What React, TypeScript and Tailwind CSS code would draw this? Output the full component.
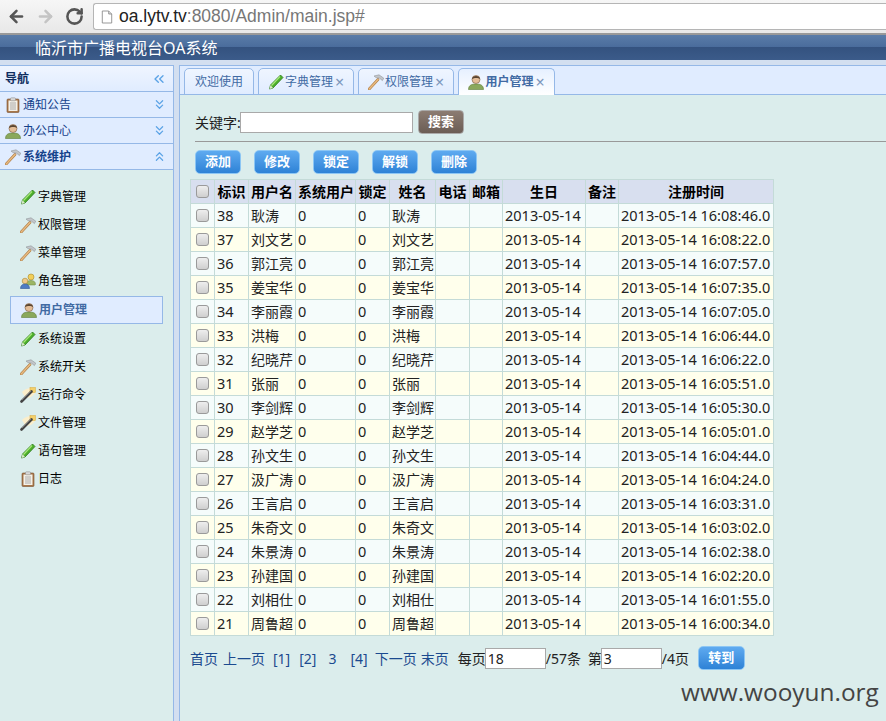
import React from 'react';
import { ArrowLeft, ArrowRight, RotateCw, ChevronsLeft, ChevronsDown, ChevronsUp } from 'lucide-react';

const Pencil = () => (
  <svg viewBox="0 0 16 16" className="w-4 h-4 shrink-0">
    <path d="M12.5 1 L15 3.5 L5 14 L1.5 15 L2.5 11 Z" fill="#4caf2a" stroke="#2c7a1c" strokeWidth="0.8" />
    <path d="M12 2.5 L3.5 11.5" stroke="#a8e67a" strokeWidth="1.2" />
    <path d="M2.5 11 L5 14 L1.5 15 Z" fill="#d9e8c8" />
  </svg>
);

const Hammer = () => (
  <svg viewBox="0 0 16 16" className="w-4 h-4 shrink-0">
    <path d="M1.2 15 L10 5.5" stroke="#b07c42" strokeWidth="2.6" strokeLinecap="round" />
    <path d="M1.2 15 L10 5.5" stroke="#e8bb82" strokeWidth="1.5" strokeLinecap="round" />
    <path d="M6 2 L11 0.8 L15.8 4.2 L14.4 6.6 L11.5 4.2 L8 3.6 Z" fill="#c3c6ca" stroke="#85888c" strokeWidth="0.5" />
  </svg>
);

const Clipboard = () => (
  <svg viewBox="0 0 16 16" className="w-4 h-4 shrink-0">
    <rect x="2" y="2" width="12" height="13.5" rx="1" fill="#a8774a" stroke="#7a5230" strokeWidth="0.6" />
    <rect x="3.5" y="3.5" width="9" height="10.5" fill="#f4f1e8" />
    <rect x="5.5" y="0.8" width="5" height="3" rx="0.8" fill="#d8d8d8" stroke="#888" strokeWidth="0.5" />
    <path d="M5 6h6M5 8h6M5 10h6M5 12h6" stroke="#9a9a9a" strokeWidth="0.8" />
  </svg>
);

const User = () => (
  <svg viewBox="0 0 16 16" className="w-4 h-4 shrink-0">
    <path d="M0.5 15.5 C0.5 11 4 10 8 10 C12 10 15.5 11 15.5 15.5 Z" fill="#8aa85c" stroke="#5f7d3a" strokeWidth="0.6" />
    <circle cx="8" cy="5.5" r="4" fill="#e4bd97" stroke="#7a5a40" strokeWidth="0.6" />
    <path d="M4 5 C4 1 12 1 12 5 C10.5 3.5 6 3.5 4 5 Z" fill="#5a4632" />
  </svg>
);

const Users = () => (
  <svg viewBox="0 0 16 16" className="w-4 h-4 shrink-0">
    <circle cx="11" cy="4" r="3" fill="#f2cf5a" stroke="#a8892c" strokeWidth="0.6" />
    <path d="M6.5 11 C6.5 8 9 7.5 11 7.5 C13.5 7.5 15.5 8.5 15.5 11.5 L15 12 L7 12 Z" fill="#9bb564" stroke="#6b8440" strokeWidth="0.5" />
    <circle cx="5" cy="8" r="2.8" fill="#f0c88a" stroke="#a8892c" strokeWidth="0.6" />
    <path d="M0.5 15.5 C0.5 12.5 2.5 11 5 11 C7.5 11 9.5 12.5 9.5 15.5 Z" fill="#4f7cc4" stroke="#2f5596" strokeWidth="0.6" />
  </svg>
);

const Wand = () => (
  <svg viewBox="0 0 16 16" className="w-4 h-4 shrink-0">
    <path d="M2 5 C5 2 8 1 11 1 L15 1 L15 5 C14 9 9 12 5 10 Z" fill="#fbeecb" />
    <rect x="10" y="0.5" width="5.5" height="5" fill="#f3cf6a" stroke="#d9a93c" strokeWidth="0.5" />
    <path d="M1.5 14.5 L11.5 4.5" stroke="#444" strokeWidth="2.6" strokeLinecap="round" />
    <path d="M2 13 L11 4" stroke="#999" strokeWidth="0.7" />
  </svg>
);

const menu: Array<{ icon: React.ReactNode; label: string; active?: boolean }> = [
  { icon: <Pencil />, label: '字典管理' },
  { icon: <Hammer />, label: '权限管理' },
  { icon: <Hammer />, label: '菜单管理' },
  { icon: <Users />, label: '角色管理' },
  { icon: <User />, label: '用户管理', active: true },
  { icon: <Pencil />, label: '系统设置' },
  { icon: <Hammer />, label: '系统开关' },
  { icon: <Wand />, label: '运行命令' },
  { icon: <Wand />, label: '文件管理' },
  { icon: <Pencil />, label: '语句管理' },
  { icon: <Clipboard />, label: '日志' },
];

const rows = [
  ['38', '耿涛', '16:08:46.0'],
  ['37', '刘文艺', '16:08:22.0'],
  ['36', '郭江亮', '16:07:57.0'],
  ['35', '姜宝华', '16:07:35.0'],
  ['34', '李丽霞', '16:07:05.0'],
  ['33', '洪梅', '16:06:44.0'],
  ['32', '纪晓芹', '16:06:22.0'],
  ['31', '张丽', '16:05:51.0'],
  ['30', '李剑辉', '16:05:30.0'],
  ['29', '赵学芝', '16:05:01.0'],
  ['28', '孙文生', '16:04:44.0'],
  ['27', '汲广涛', '16:04:24.0'],
  ['26', '王言启', '16:03:31.0'],
  ['25', '朱奇文', '16:03:02.0'],
  ['24', '朱景涛', '16:02:38.0'],
  ['23', '孙建国', '16:02:20.0'],
  ['22', '刘相仕', '16:01:55.0'],
  ['21', '周鲁超', '16:00:34.0'],
];

const headers = ['标识', '用户名', '系统用户', '锁定', '姓名', '电话', '邮箱', '生日', '备注', '注册时间'];
const widths = [24, 34, 47, 60, 34, 46, 34, 33, 83, 33, 155];

const AccordionHead = ({ icon, label, open }: { icon: React.ReactNode; label: string; open?: boolean }) => (
  <div className="h-[26px] flex items-center pl-[5px] pr-[6px] border-b border-[#95b8e7] bg-[#e0ecff]">
    {icon}
    <span className={`ml-[2px] text-[12px] text-[#15428b] ${open ? 'font-bold' : ''}`}>{label}</span>
    <span className="ml-auto">
      {open ? <ChevronsUp size={15} color="#5ba3e6" /> : <ChevronsDown size={15} color="#5ba3e6" />}
    </span>
  </div>
);

const Tab = ({ icon, label, active, closable, w }: { icon?: React.ReactNode; label: string; active?: boolean; closable?: boolean; w: string }) => (
  <div
    className={`${w} h-[27px] -mb-px flex items-center justify-center gap-[1px] border border-[#95b8e7] rounded-t-[5px] text-[12px] ${
      active
        ? 'border-b-0 bg-gradient-to-b from-[#e6f0ff] to-white text-[#416aa3] font-bold'
        : 'bg-gradient-to-b from-[#eff5ff] to-[#e0ecff] text-[#416aa3]'
    }`}
  >
    {icon}
    <span>{label}</span>
    {closable && <span className="text-[16px] font-normal leading-none text-[#7d98bd] ml-[1px]">×</span>}
  </div>
);

const BlueButton = ({ label, w }: { label: string; w: string }) => (
  <button className={`${w} h-[24px] rounded-[5px] border border-[#8cc6f4] bg-gradient-to-b from-[#5eaaf0] to-[#2d82d6] text-white text-[13px] font-bold`}>
    {label}
  </button>
);

const Check = () => (
  <input
    type="checkbox"
    className="block mx-auto w-[13px] h-[13px] appearance-none rounded-[3px] border border-[#9a9a9a] bg-gradient-to-b from-[#eeeeee] to-[#cfcfcf]"
  />
);

const cell = 'border border-[#c4dbd8] px-[2px] whitespace-nowrap overflow-hidden';
const latin = `${cell} text-[14.5px]`;
const link = 'text-[#1b4a8f]';

export default function App() {
  return (
    <div
      className="relative w-[886px] h-[721px] overflow-hidden flex flex-col bg-[#dbedec] text-[14px] text-[#222]"
      style={{ fontFamily: '"Noto Sans", "Noto Sans CJK SC", sans-serif' }}
    >
      {/* browser bar */}
      <div className="h-[35px] shrink-0 flex items-center gap-[10px] pl-[7px] bg-gradient-to-b from-[#f6f6f6] to-[#e8e8e8] border-b-2 border-[#999]">
        <ArrowLeft size={19} strokeWidth={3.2} color="#555" />
        <ArrowRight size={19} strokeWidth={3.2} color="#c4c4c4" />
        <RotateCw size={19} strokeWidth={3.2} color="#555" />
        <div className="-ml-[1px] flex-1 h-[27px] flex items-center pl-[7px] bg-white border border-[#b5b5b5] border-r-0 rounded-l-[3px]">
          <svg viewBox="0 0 14 16" className="w-[12px] h-[14px] shrink-0">
            <path d="M1.5 1 H9 L12.5 4.5 V15 H1.5 Z" fill="#fff" stroke="#888" />
            <path d="M9 1 V4.5 H12.5" fill="#ddd" stroke="#888" />
          </svg>
          <span className="ml-[6px] text-[17.5px] text-[#222]" style={{ fontFamily: '"Liberation Sans", sans-serif' }}>
            oa.lytv.tv<span className="text-[#777]">:8080/Admin/main.jsp#</span>
          </span>
        </div>
      </div>

      {/* system title */}
      <div className="h-[25px] shrink-0 flex items-center pl-[35px] bg-[linear-gradient(#5a7ca8_0%,#4a6c9c_48%,#34527f_48%,#3b5b8a_100%)]">
        <span className="text-[16px] leading-none text-white">临沂市广播电视台OA系统</span>
      </div>

      <div className="flex-1 flex pt-[5px] bg-[#d3dff0] min-h-0">
        {/* nav */}
        <div className="w-[174px] shrink-0 flex flex-col border-t border-r border-[#95b8e7] bg-[#dbedec]">
          <div className="h-[26px] shrink-0 flex items-center pl-[5px] pr-[6px] border-b border-[#95b8e7] bg-gradient-to-b from-[#eff5ff] to-[#e0ecff]">
            <span className="text-[12px] font-bold text-[#0e2d5f]">导航</span>
            <ChevronsLeft size={16} color="#5ba3e6" className="ml-auto" />
          </div>
          <AccordionHead icon={<Clipboard />} label="通知公告" />
          <AccordionHead icon={<User />} label="办公中心" />
          <AccordionHead icon={<Hammer />} label="系统维护" open />
          <div className="pt-[13px] pl-[10px] pr-[10px] flex flex-col">
            {menu.map((m) => (
              <div
                key={m.label}
                className={`h-[28px] flex items-center gap-[2px] pl-[10px] text-[12px] ${
                  m.active ? 'border border-[#95b8e7] bg-[#e0ecff] text-[#416aa3] font-bold my-px' : 'text-black'
                }`}
              >
                {m.icon}
                <span>{m.label}</span>
              </div>
            ))}
          </div>
        </div>

        <div className="w-[5px] shrink-0" />

        {/* main panel */}
        <div className="flex-1 min-w-0 flex flex-col border-l border-[#95b8e7] bg-[#dbedec]">
          <div className="h-[30px] shrink-0 flex items-end gap-[4px] pl-[4px] border-t border-b border-[#95b8e7] bg-[#e0ecff]">
            <Tab label="欢迎使用" w="w-[70px]" />
            <Tab icon={<Pencil />} label="字典管理" closable w="w-[96px]" />
            <Tab icon={<Hammer />} label="权限管理" closable w="w-[96px]" />
            <Tab icon={<User />} label="用户管理" closable active w="w-[97px]" />
          </div>

          <div className="flex-1 pl-[10px] min-h-0">
            {/* search */}
            <div className="h-[47px] flex items-center pt-[14px] pb-[6px] border-b border-[#999] ml-[5px] box-border">
              <span className="w-[45px] text-[14px] whitespace-nowrap text-[#222]">关键字:</span>
              <div className="w-[173px] h-[21px] bg-white border border-[#a9a9a9]" />
              <button className="ml-[5px] w-[46px] h-[24px] rounded-[4px] border border-[#aaa] bg-gradient-to-b from-[#8c7c72] to-[#6b5d55] text-white text-[13px] font-bold">
                搜索
              </button>
            </div>

            {/* toolbar */}
            <div className="flex gap-[13px] ml-[5px] mt-[8px]">
              {['添加', '修改', '锁定', '解锁', '删除'].map((b) => (
                <BlueButton key={b} label={b} w="w-[46px]" />
              ))}
            </div>

            {/* users */}
            <table className="mt-[5px] table-fixed border-collapse w-[583px]">
              <colgroup>
                {widths.map((w, i) => (
                  <col key={i} style={{ width: w }} />
                ))}
              </colgroup>
              <thead>
                <tr className="h-[24px] bg-[#d8dfef]">
                  <th className={cell}>
                    <Check />
                  </th>
                  {headers.map((h) => (
                    <th key={h} className={`${cell} text-[14px] font-bold text-black text-center leading-none`}>
                      {h}
                    </th>
                  ))}
                </tr>
              </thead>
              <tbody>
                {rows.map((r, i) => (
                  <tr key={r[0]} className={`h-[24px] ${i % 2 === 0 ? 'bg-[#f5fcfb]' : 'bg-[#ffffec]'}`}>
                    <td className={cell}>
                      <Check />
                    </td>
                    <td className={latin}>{r[0]}</td>
                    <td className={cell}>{r[1]}</td>
                    <td className={latin}>0</td>
                    <td className={latin}>0</td>
                    <td className={cell}>{r[1]}</td>
                    <td className={cell} />
                    <td className={cell} />
                    <td className={latin}>2013-05-14</td>
                    <td className={cell} />
                    <td className={latin}>2013-05-14 {r[2]}</td>
                  </tr>
                ))}
              </tbody>
            </table>

            {/* pager */}
            <div className="mt-[10px] h-[24px] flex items-center text-[14px] whitespace-nowrap">
              <span className={link}>首页</span>
              <span className={`ml-[5px] ${link}`}>上一页</span>
              <span className={`ml-[8px] ${link}`}>[1]</span>
              <span className={`ml-[9px] ${link}`}>[2]</span>
              <span className={`ml-[12px] ${link}`}>3</span>
              <span className={`ml-[14px] ${link}`}>[4]</span>
              <span className={`ml-[7px] ${link}`}>下一页</span>
              <span className={`ml-[4px] ${link}`}>末页</span>
              <span className="ml-[9px] w-[27px]">每页</span>
              <div className="w-[61px] h-[21px] flex items-center bg-white border border-[#a9a9a9] pl-[2px]">18</div>
              <span className="w-[37px]">/57条</span>
              <span className="ml-[5px] w-[13px]">第</span>
              <div className="w-[61px] h-[21px] flex items-center bg-white border border-[#a9a9a9] pl-[2px]">3</div>
              <span className="w-[28px]">/4页</span>
              <span className="ml-[8px]">
                <BlueButton label="转到" w="w-[47px]" />
              </span>
            </div>
          </div>
        </div>
      </div>

      {/* watermark */}
      <span className="absolute left-[681px] top-[677px] text-[24.4px] leading-[30px] text-[#444]" style={{ fontFamily: '"Open Sans", sans-serif' }}>
        www.wooyun.org
      </span>
    </div>
  );
}
